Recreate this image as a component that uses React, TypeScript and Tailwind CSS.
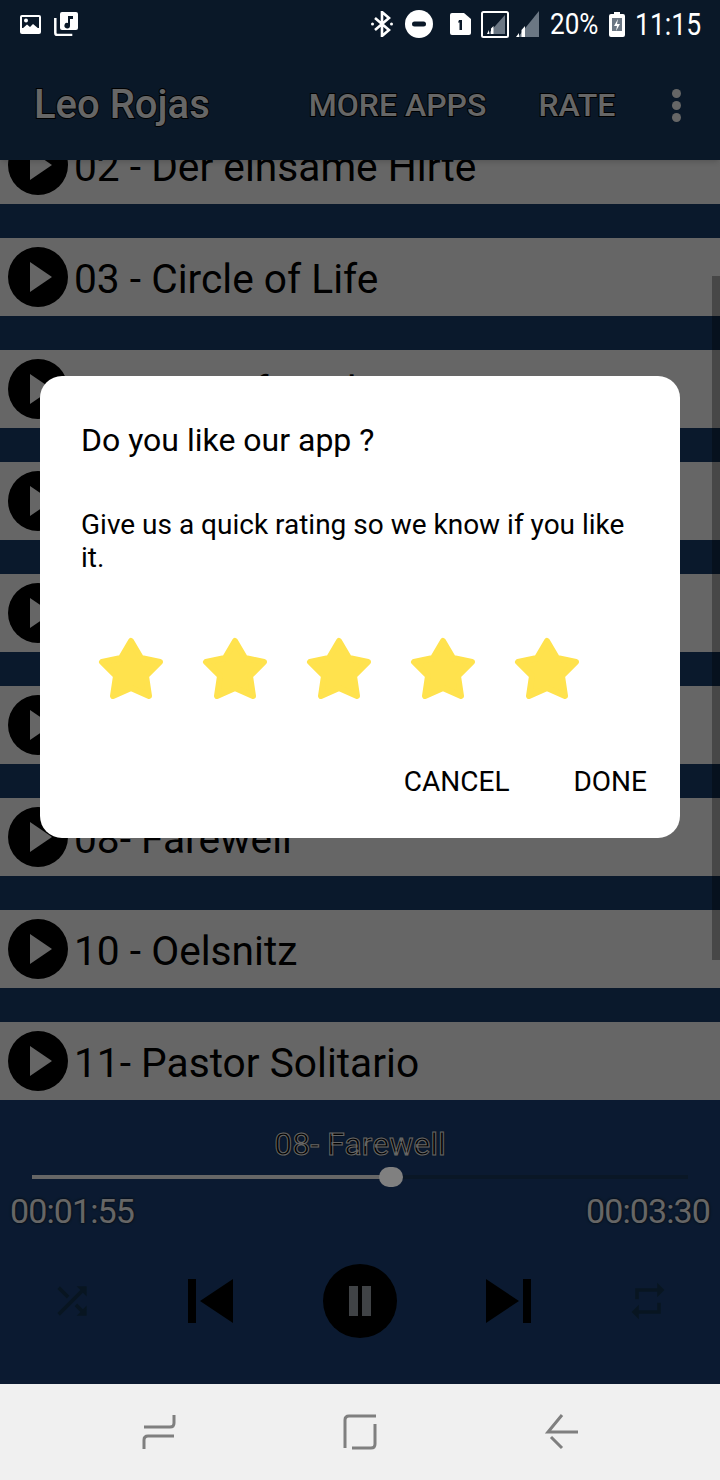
const SONGS = [
  '02 - Der einsame Hirte',
  '03 - Circle of Life',
  '04 - Son of Eagle',
  '05 - Albatross',
  '06 - El Condor Pasa',
  '07 - Ave Maria',
  '08- Farewell',
  '10 - Oelsnitz',
  '11- Pastor Solitario',
];

function Star() {
  return (
    <svg viewBox="0 0 66 64" className="h-16 w-[66px]">
      <path
        d="M33 5 L43 22 L62 26 L48 40 L51 60 L33 52 L15 60 L18 40 L4 26 L23 22 Z"
        fill="#ffe24d"
        stroke="#ffe24d"
        strokeWidth="6"
        strokeLinejoin="round"
      />
    </svg>
  );
}

function StatusBar() {
  return (
    <div className="relative z-20 flex h-[52px] items-center bg-[#0a1828] pb-1 pl-5 pr-5 text-white">
      <svg viewBox="0 0 21 19" className="h-[19px] w-[21px]">
        <rect width="21" height="19" rx="2" fill="#fff" />
        <rect x="2" y="2" width="17" height="11" fill="#0a1828" />
        <circle cx="6" cy="5.500" r="2" fill="#fff" />
        <path fill="#fff" d="M2 14l5-4.500 3 2.500 3-3 6 5v2H2z" />
      </svg>
      <svg viewBox="0 0 24 24" className="ml-[13px] h-6 w-6">
        <path fill="#fff" d="M8 0h14a2 2 0 0 1 2 2v14a2 2 0 0 1-2 2H8a2 2 0 0 1-2-2V2a2 2 0 0 1 2-2z" />
        <path fill="none" stroke="#fff" strokeWidth="2.500" d="M1.300 6v15a2 2 0 0 0 2 2h15" />
        <path fill="#0a1828" d="M14 4h5v3h-3v6.500a2.800 2.800 0 1 1-2-2.600z" />
      </svg>
      <div className="ml-auto flex items-center">
        <svg viewBox="0 0 22 26" className="h-[26px] w-[22px]">
          <path fill="none" stroke="#fff" strokeWidth="2.600" d="M4 7l14 12-7 6V1l7 6L4 19" />
          <circle cx="1.500" cy="13" r="1.500" fill="#fff" />
          <circle cx="20.500" cy="13" r="1.500" fill="#fff" />
        </svg>
        <svg viewBox="0 0 28 28" className="ml-3 h-7 w-7">
          <circle cx="14" cy="14" r="14" fill="#fff" />
          <rect x="7" y="11.500" width="14" height="5" rx="2.500" fill="#0a1828" />
        </svg>
        <svg viewBox="0 0 21 22" className="ml-[17px] h-[22px] w-[21px]">
          <path fill="#fff" d="M2 0h12l7 6v14a2 2 0 0 1-2 2H2a2 2 0 0 1-2-2V2a2 2 0 0 1 2-2z" />
          <path fill="#0a1828" d="M9 7h3v10H9.500V9.500H8z" />
        </svg>
        <svg viewBox="0 0 28 27" className="ml-2.5 h-[27px] w-7">
          <rect x="1" y="1" width="26" height="25" rx="1.500" fill="none" stroke="#fff" strokeWidth="2" />
          <path fill="#6b7784" d="M24 4v19H7z" />
          <path fill="#fff" d="M6 23h2v-4zM10 23h2.500v-8L10 17.500z" />
        </svg>
        <svg viewBox="0 0 24 26" className="ml-1.5 h-[26px] w-6">
          <path fill="#6b7784" d="M24 0v26H3z" />
          <path fill="#fff" d="M1 26h3v-4zM6.500 26H10V15l-3.500 4z" />
        </svg>
        <span className="ml-[11px] inline-block w-[47px] origin-left scale-x-[0.87] whitespace-nowrap text-[30px] leading-none">20%</span>
        <svg viewBox="0 0 16 25" className="ml-3 h-[25px] w-4">
          <path fill="#fff" d="M5 0h6v2h3a2 2 0 0 1 2 2v19a2 2 0 0 1-2 2H2a2 2 0 0 1-2-2V4a2 2 0 0 1 2-2h3z" />
          <rect x="3" y="6" width="10" height="13" fill="#6b7784" />
          <path fill="#fff" d="M9 7l-4 7h3l-1 5 4-7H8z" />
        </svg>
        <span className="ml-2.5 inline-block w-[65px] origin-left scale-x-[0.83] whitespace-nowrap text-[32px] leading-none">11:15</span>
      </div>
    </div>
  );
}

function SongRow({ title }: { title: string }) {
  return (
    <div className="flex h-[78px] shrink-0 items-center bg-white pl-2">
      <div className="flex h-[60px] w-[60px] shrink-0 items-center justify-center rounded-full bg-black">
        <svg viewBox="0 0 22 30" className="ml-1.5 h-[30px] w-[22px]">
          <path d="M0 0 L22 15 L0 30 Z" fill="#fff" />
        </svg>
      </div>
      <span className="ml-1.5 whitespace-nowrap pt-1 text-[40.7px] leading-none text-black">{title}</span>
    </div>
  );
}

function Player() {
  return (
    <div className="flex h-[284px] shrink-0 flex-col bg-[#1c437a]">
      <div className="mt-[26px] text-center text-[32px] leading-9 text-black [-webkit-text-stroke:1px_#fff] [text-shadow:0_0_2px_#000]">08- Farewell</div>
      <div className="relative mx-8 mt-[13px] h-1 bg-[#1a3a60]">
        <div className="h-1 w-[359px] bg-white" />
        <div className="absolute left-[347px] top-[-8px] z-20 h-5 w-6 rounded-[11px] bg-[#808080]" />
      </div>
      <div className="mt-[14px] flex justify-between px-2.5 text-[34px] leading-9 tracking-[-0.9px] text-white [text-shadow:0_0_3px_#000]">
        <span>00:01:55</span>
        <span>00:03:30</span>
      </div>
      <div className="relative mt-[35px] flex items-center justify-center">
        <svg viewBox="0 0 24 24" className="absolute left-[50px] h-11 w-11" fill="#143654">
          <path d="M10.590 9.170L5.410 4 4 5.410l5.170 5.170 1.420-1.410zM14.500 4l2.040 2.040L4 18.590 5.410 20 17.960 7.460 20 9.500V4h-5.500zm.33 9.410l-1.410 1.410 3.130 3.130L14.500 20H20v-5.500l-2.040 2.040-3.130-3.130z" />
        </svg>
        <svg viewBox="0 0 45 44" className="absolute left-[188px] h-11 w-[45px]">
          <path d="M0 0h8v44H0zM45 0v44L12 22z" fill="#000" />
        </svg>
        <div className="flex h-[74px] w-[74px] items-center justify-center gap-[4px] rounded-full bg-black">
          <div className="h-[30px] w-[9px] bg-[#a0a8b0]" />
          <div className="h-[30px] w-[9px] bg-[#a0a8b0]" />
        </div>
        <svg viewBox="0 0 45 44" className="absolute left-[486px] h-11 w-[45px]">
          <path d="M45 0h-8v44h8zM0 0v44l33-22z" fill="#000" />
        </svg>
        <svg viewBox="0 0 24 24" className="absolute left-[626px] h-11 w-11" fill="#143654">
          <path d="M7 7h10v3l4-4-4-4v3H5v6h2V7zm10 10H7v-3l-4 4 4 4v-3h12v-6h-2v4z" />
        </svg>
      </div>
    </div>
  );
}

function NavBar() {
  return (
    <div className="flex h-24 shrink-0 items-center bg-[#f0f0f0]">
      <svg viewBox="0 0 720 96" className="h-24 w-full" fill="none" stroke="#7f7f7f" strokeWidth="3">
        <path d="M144 43H170q4 0 4-4V31M174 52H148q-4 0-4 4V65" />
        <path d="M376 32H349q-4 0-4 4V64M375 40V60q0 4-4 4H352" />
        <path d="M578 48H548L562 31M551 53L562 64" />
      </svg>
    </div>
  );
}

function RatingDialog() {
  return (
    <div className="absolute left-10 top-[376px] z-30 h-[462px] w-[640px] rounded-[22px] bg-white px-[41px] text-black">
      <div className="mt-[46px] text-[32px] leading-9">Do you like our app ?</div>
      <div className="mt-[50px] text-[28px] leading-[33px]">Give us a quick rating so we know if you like it.</div>
      <div className="mt-[62px] flex gap-[38px] pl-[17px]">
        <Star />
        <Star />
        <Star />
        <Star />
        <Star />
      </div>
      <div className="mt-16 flex justify-end gap-16 text-[28px] leading-9">
        <span>CANCEL</span>
        <span className="mr-[-8px]">DONE</span>
      </div>
    </div>
  );
}

export default function App() {
  return (
    <div className="relative flex h-[1480px] w-[720px] flex-col overflow-hidden bg-[#1c437a] font-['Roboto',sans-serif]">
      <StatusBar />
      <div className="relative z-[1] flex h-[108px] shrink-0 items-center bg-[#1a3c64] pb-0.5 pl-[34px] text-white shadow-md [-webkit-text-stroke:2px_#000] [paint-order:stroke_fill]">
        <span className="text-[40px] font-medium leading-none">Leo Rojas</span>
        <span className="ml-[99px] text-[32px] font-medium leading-none">MORE APPS</span>
        <span className="ml-[52px] text-[32px] font-medium leading-none">RATE</span>
        <div className="ml-[57px] flex flex-col gap-[3px]">
          <div className="h-[9px] w-[9px] rounded-full bg-white" />
          <div className="h-[9px] w-[9px] rounded-full bg-white" />
          <div className="h-[9px] w-[9px] rounded-full bg-white" />
        </div>
      </div>
      <div className="relative flex-1 overflow-hidden bg-[#19406f]">
        <div className="mt-[-34px] flex flex-col gap-[34px]">
          {SONGS.map((song) => (
            <SongRow key={song} title={song} />
          ))}
        </div>
        <div className="absolute right-0 top-[116px] h-[684px] w-2 bg-black/30" />
      </div>
      <Player />
      <NavBar />
      <div className="absolute inset-x-0 top-0 z-10 h-[1384px] bg-black/60" />
      <RatingDialog />
    </div>
  );
}
